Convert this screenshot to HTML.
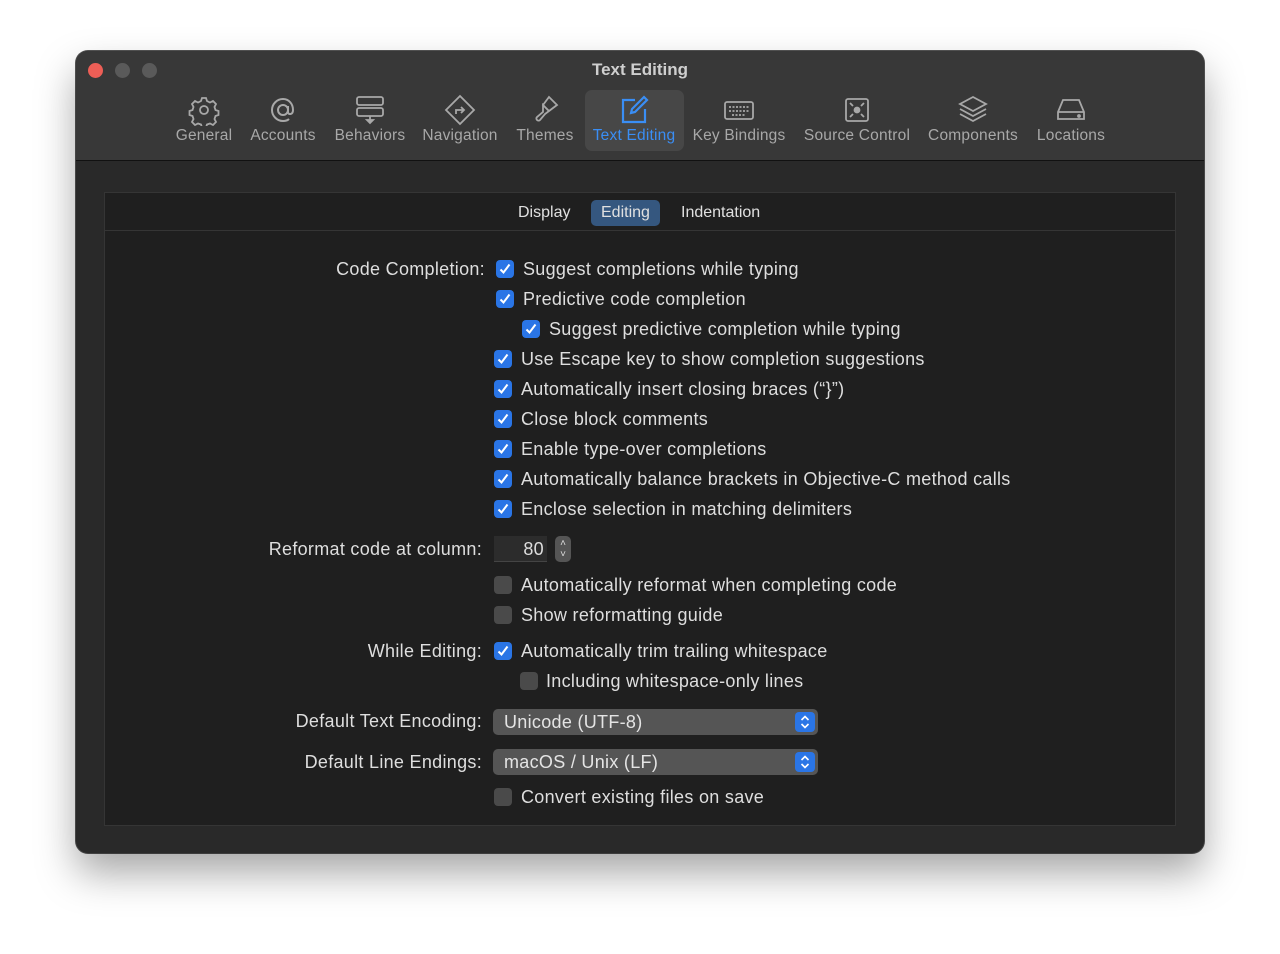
<!DOCTYPE html>
<html><head><meta charset="utf-8"><style>
*{margin:0;padding:0;box-sizing:border-box}
body{width:1280px;height:954px;background:#fff;font-family:"Liberation Sans",sans-serif;position:relative;overflow:hidden}
.win{position:absolute;left:76px;top:51px;width:1128px;height:802px;border-radius:12px;background:#292929;box-shadow:0 20px 40px rgba(0,0,0,.35),0 0 0 1px #555;overflow:hidden}
.tb{position:absolute;left:0;top:0;width:100%;height:110px;background:#383838;border-bottom:1px solid #111}
.dot{position:absolute;top:12px;width:15px;height:15px;border-radius:50%;background:#5a5a5a}
.title{position:absolute;left:0;width:100%;top:9px;text-align:center;color:#cfcfcf;font-weight:bold;font-size:17px}
.ti{position:absolute;top:43px;width:110px;margin-left:-55px;text-align:center;color:#a8a8a8;font-size:15.5px;letter-spacing:.2px}
.ti svg{display:block;margin:0 auto 1px;width:32px;height:32px}
.ti span{display:block;white-space:nowrap}
.sel{position:absolute;left:509px;top:39px;width:99px;height:61px;background:#474747;border-radius:7px}
.box{position:absolute;left:28px;top:141px;width:1072px;height:634px;background:#1f1f1f;border:1px solid #353535}
.tabs{position:absolute;left:0;top:0;width:100%;height:38px;border-bottom:1px solid #353535}
.tab{position:absolute;top:7px;height:26px;line-height:26px;color:#e0e0e0;font-size:16px;padding:0 10px;border-radius:5px}
.t{position:absolute;color:#dedede;font-size:18px;letter-spacing:.3px;white-space:nowrap;line-height:20px}
.lab{text-align:right;width:400px}
.cb{position:absolute;width:18px;height:18px;border-radius:4px;background:#2a75e6}
.cb svg{position:absolute;left:2px;top:2px}
.cbu{position:absolute;width:18px;height:18px;border-radius:4px;background:#4a4a4a}
.pop{position:absolute;left:493px;width:325px;height:26px;border-radius:5px;background:#555;color:#e4e4e4;font-size:18px;letter-spacing:.3px;line-height:26px;padding-left:11px}
.pop i{position:absolute;right:3px;top:3px;width:20px;height:20px;border-radius:4px;background:#2a75e6}
</style></head><body>
<div class="win">
<div class="tb">
<div class="dot" style="left:12px;background:#ed5e56"></div>
<div class="dot" style="left:39px"></div>
<div class="dot" style="left:66px"></div>
<div class="title">Text Editing</div>
<div class="sel"></div>
<div class="ti" style="left:128px"><svg viewBox="0 0 32 32" fill="none" stroke="#a8a8a8" stroke-width="1.8"><circle cx="16" cy="16" r="4"/><path d="M14 4h4l1 3 3 1.5 3-1.5 3 3-1.5 3 1 3 3 1v4l-3 1-1 3 1.5 3-3 3-3-1.5-3 1-1 3h-4l-1-3-3-1-3 1.5-3-3 1.5-3-1-3-3-1v-4l3-1 1-3-1.5-3 3-3 3 1.5 3-1.5z"/></svg><span>General</span></div>
<div class="ti" style="left:207px"><svg viewBox="0 0 32 32" fill="none" stroke="#a8a8a8" stroke-width="2"><circle cx="16" cy="16" r="5"/><path d="M21 12v6c0 3 5 3 5-2 0-6-4-11-10-11S5 10 5 16s5 11 11 11c3 0 5-1 6-2"/></svg><span>Accounts</span></div>
<div class="ti" style="left:294px"><svg viewBox="0 0 32 32" fill="none" stroke="#a8a8a8" stroke-width="1.8"><rect x="3" y="3" width="26" height="8" rx="2"/><rect x="3" y="14" width="26" height="8" rx="2"/><path d="M16 22v5"/><path d="M13 26l3 3 3-3z" fill="#a8a8a8"/></svg><span>Behaviors</span></div>
<div class="ti" style="left:384px"><svg viewBox="0 0 32 32" fill="none" stroke="#a8a8a8" stroke-width="1.8"><path d="M16 2l14 14-14 14L2 16z"/><path d="M12 20v-4h8M17 13l3 3-3 3"/></svg><span>Navigation</span></div>
<div class="ti" style="left:469px"><svg viewBox="0 0 32 32" fill="none" stroke="#a8a8a8" stroke-width="1.8"><path d="M20 3l8 8-8 6-6-6zM14 11l6 6-4 3-5 6c-2 2-5-1-3-3l6-5z"/></svg><span>Themes</span></div>
<div class="ti" style="left:558px;color:#3a8ef5"><svg viewBox="0 0 32 32" fill="none" stroke="#3a8ef5" stroke-width="2.2"><path d="M17 6H5v22h22V15"/><path d="M13 19l1-4L26 3l3 3-12 12z"/></svg><span>Text Editing</span></div>
<div class="ti" style="left:663px"><svg viewBox="0 0 32 32" fill="none" stroke="#a8a8a8" stroke-width="1.8"><rect x="2" y="8" width="28" height="17" rx="2"/><path d="M6 13h20M6 17h20M9 21h14" stroke-dasharray="2 1.5"/></svg><span>Key Bindings</span></div>
<div class="ti" style="left:781px"><svg viewBox="0 0 32 32" fill="none" stroke="#a8a8a8" stroke-width="1.8"><rect x="5" y="5" width="22" height="22" rx="2"/><circle cx="16" cy="16" r="2.5" fill="#a8a8a8"/><path d="M9 9l3 3M23 9l-3 3M9 23l3-3M23 23l-3-3"/></svg><span>Source Control</span></div>
<div class="ti" style="left:897px"><svg viewBox="0 0 32 32" fill="none" stroke="#a8a8a8" stroke-width="1.8"><path d="M16 3L3 10l13 7 13-7z"/><path d="M3 15l13 7 13-7M3 20l13 7 13-7"/></svg><span>Components</span></div>
<div class="ti" style="left:995px"><svg viewBox="0 0 32 32" fill="none" stroke="#a8a8a8" stroke-width="1.8"><path d="M3 18l5-12h16l5 12v7H3z M3 18h26"/><circle cx="24" cy="22" r="1" fill="#a8a8a8"/></svg><span>Locations</span></div>
</div>
<div class="box">
<div class="tabs">
<div class="tab" style="left:403px">Display</div>
<div class="tab" style="left:486px;background:#35577f">Editing</div>
<div class="tab" style="left:566px">Indentation</div>
</div>
</div>
</div>
<div class="t lab" style="left:85px;top:259px">Code Completion:</div>
<div class="t lab" style="left:82px;top:539px">Reformat code at column:</div>
<div class="t lab" style="left:82px;top:641px">While Editing:</div>
<div class="t lab" style="left:82px;top:711px">Default Text Encoding:</div>
<div class="t lab" style="left:82px;top:752px">Default Line Endings:</div>

<div class="cb" style="left:496px;top:260px"><svg width="14" height="14" viewBox="0 0 14 14"><path d="M2.5 7.5l3 3 6-8" stroke="#fff" stroke-width="2" fill="none"/></svg></div><div class="t" style="left:523px;top:259px">Suggest completions while typing</div>
<div class="cb" style="left:496px;top:290px"><svg width="14" height="14" viewBox="0 0 14 14"><path d="M2.5 7.5l3 3 6-8" stroke="#fff" stroke-width="2" fill="none"/></svg></div><div class="t" style="left:523px;top:289px">Predictive code completion</div>
<div class="cb" style="left:522px;top:320px"><svg width="14" height="14" viewBox="0 0 14 14"><path d="M2.5 7.5l3 3 6-8" stroke="#fff" stroke-width="2" fill="none"/></svg></div><div class="t" style="left:549px;top:319px">Suggest predictive completion while typing</div>
<div class="cb" style="left:494px;top:350px"><svg width="14" height="14" viewBox="0 0 14 14"><path d="M2.5 7.5l3 3 6-8" stroke="#fff" stroke-width="2" fill="none"/></svg></div><div class="t" style="left:521px;top:349px">Use Escape key to show completion suggestions</div>
<div class="cb" style="left:494px;top:380px"><svg width="14" height="14" viewBox="0 0 14 14"><path d="M2.5 7.5l3 3 6-8" stroke="#fff" stroke-width="2" fill="none"/></svg></div><div class="t" style="left:521px;top:379px">Automatically insert closing braces (“}”)</div>
<div class="cb" style="left:494px;top:410px"><svg width="14" height="14" viewBox="0 0 14 14"><path d="M2.5 7.5l3 3 6-8" stroke="#fff" stroke-width="2" fill="none"/></svg></div><div class="t" style="left:521px;top:409px">Close block comments</div>
<div class="cb" style="left:494px;top:440px"><svg width="14" height="14" viewBox="0 0 14 14"><path d="M2.5 7.5l3 3 6-8" stroke="#fff" stroke-width="2" fill="none"/></svg></div><div class="t" style="left:521px;top:439px">Enable type-over completions</div>
<div class="cb" style="left:494px;top:470px"><svg width="14" height="14" viewBox="0 0 14 14"><path d="M2.5 7.5l3 3 6-8" stroke="#fff" stroke-width="2" fill="none"/></svg></div><div class="t" style="left:521px;top:469px">Automatically balance brackets in Objective-C method calls</div>
<div class="cb" style="left:494px;top:500px"><svg width="14" height="14" viewBox="0 0 14 14"><path d="M2.5 7.5l3 3 6-8" stroke="#fff" stroke-width="2" fill="none"/></svg></div><div class="t" style="left:521px;top:499px">Enclose selection in matching delimiters</div>

<div style="position:absolute;left:494px;top:536px;width:53px;height:26px;background:#2c2c2c;border-bottom:1px solid #444"></div>
<div class="t" style="left:494px;top:539px;width:50px;text-align:right">80</div>
<div style="position:absolute;left:555px;top:536px;width:16px;height:26px;border-radius:5px;background:#555;color:#ddd;font-size:10px;line-height:11px;text-align:center;padding-top:2px">˄<br>˅</div>

<div class="cbu" style="left:494px;top:576px"></div><div class="t" style="left:521px;top:575px">Automatically reformat when completing code</div>
<div class="cbu" style="left:494px;top:606px"></div><div class="t" style="left:521px;top:605px">Show reformatting guide</div>
<div class="cb" style="left:494px;top:642px"><svg width="14" height="14" viewBox="0 0 14 14"><path d="M2.5 7.5l3 3 6-8" stroke="#fff" stroke-width="2" fill="none"/></svg></div><div class="t" style="left:521px;top:641px">Automatically trim trailing whitespace</div>
<div class="cbu" style="left:520px;top:672px"></div><div class="t" style="left:546px;top:671px">Including whitespace-only lines</div>

<div class="pop" style="top:709px">Unicode (UTF-8)<i><svg width="20" height="20" viewBox="0 0 20 20"><path d="M6.5 8l3.5-3.5L13.5 8M6.5 12l3.5 3.5 3.5-3.5" stroke="#fff" stroke-width="1.6" fill="none"/></svg></i></div>
<div class="pop" style="top:749px">macOS / Unix (LF)<i><svg width="20" height="20" viewBox="0 0 20 20"><path d="M6.5 8l3.5-3.5L13.5 8M6.5 12l3.5 3.5 3.5-3.5" stroke="#fff" stroke-width="1.6" fill="none"/></svg></i></div>
<div class="cbu" style="left:494px;top:788px"></div><div class="t" style="left:521px;top:787px">Convert existing files on save</div>
</body></html>
